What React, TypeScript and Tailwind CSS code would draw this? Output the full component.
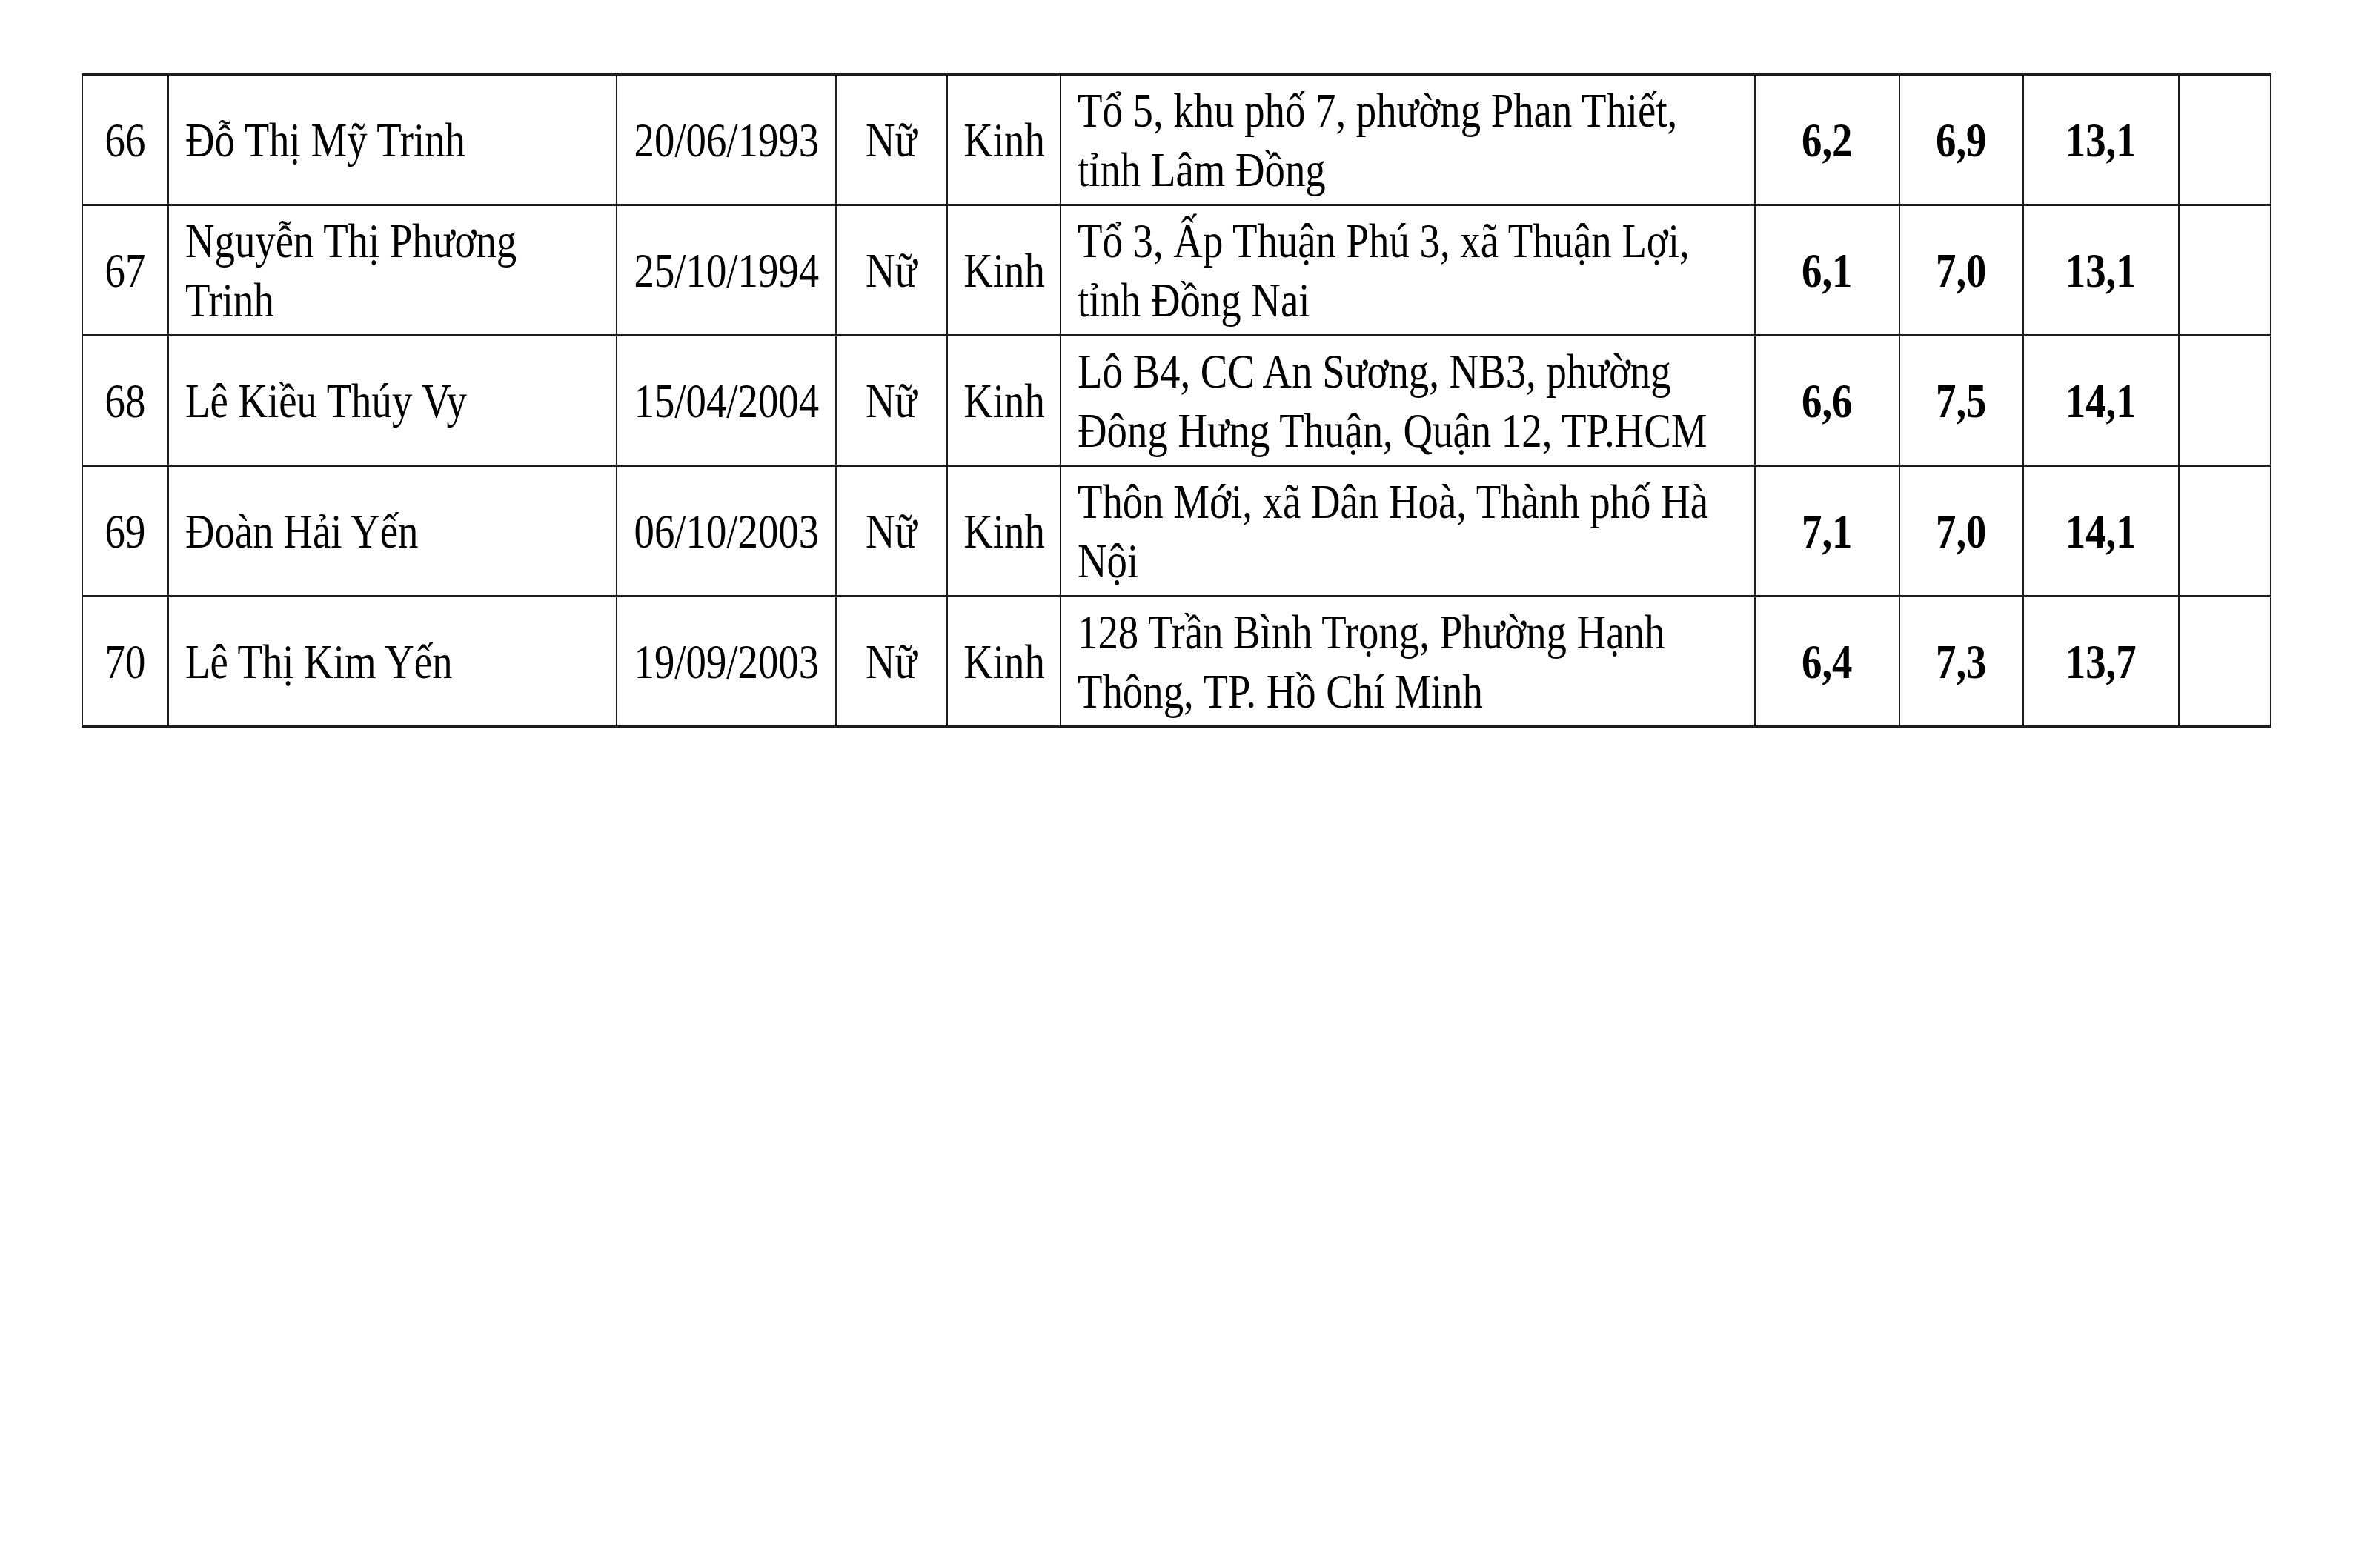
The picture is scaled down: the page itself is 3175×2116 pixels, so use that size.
type Row = {
  no: string;
  name: string[];
  dob: string;
  sex: string;
  eth: string;
  addr: string[];
  a: string;
  b: string;
  total: string;
};

const rows: Row[] = [
  {
    no: "66",
    name: ["Đỗ Thị Mỹ Trinh"],
    dob: "20/06/1993",
    sex: "Nữ",
    eth: "Kinh",
    addr: ["Tổ 5, khu phố 7, phường Phan Thiết,", "tỉnh Lâm Đồng"],
    a: "6,2",
    b: "6,9",
    total: "13,1",
  },
  {
    no: "67",
    name: ["Nguyễn Thị Phương", "Trinh"],
    dob: "25/10/1994",
    sex: "Nữ",
    eth: "Kinh",
    addr: ["Tổ 3, Ấp Thuận Phú 3, xã Thuận Lợi,", "tỉnh Đồng Nai"],
    a: "6,1",
    b: "7,0",
    total: "13,1",
  },
  {
    no: "68",
    name: ["Lê Kiều Thúy Vy"],
    dob: "15/04/2004",
    sex: "Nữ",
    eth: "Kinh",
    addr: ["Lô B4, CC An Sương, NB3, phường", "Đông Hưng Thuận, Quận 12, TP.HCM"],
    a: "6,6",
    b: "7,5",
    total: "14,1",
  },
  {
    no: "69",
    name: ["Đoàn Hải Yến"],
    dob: "06/10/2003",
    sex: "Nữ",
    eth: "Kinh",
    addr: ["Thôn Mới, xã Dân Hoà, Thành phố Hà", "Nội"],
    a: "7,1",
    b: "7,0",
    total: "14,1",
  },
  {
    no: "70",
    name: ["Lê Thị Kim Yến"],
    dob: "19/09/2003",
    sex: "Nữ",
    eth: "Kinh",
    addr: ["128 Trần Bình Trọng, Phường Hạnh", "Thông, TP. Hồ Chí Minh"],
    a: "6,4",
    b: "7,3",
    total: "13,7",
  },
];

function Cell({
  lines,
  align = "center",
  bold = false,
}: {
  lines: string[];
  align?: "left" | "center";
  bold?: boolean;
}) {
  const left = align === "left";
  return (
    <div
      className={`flex h-[176px] min-w-0 items-center border-r-2 border-b-[3px] border-[#1c1c1c] ${
        left ? "justify-start pl-[22px]" : "justify-center"
      }`}
    >
      <span
        className={`block whitespace-nowrap text-[66px] leading-[80px] text-black scale-x-[0.83] ${
          left ? "origin-left text-left" : "origin-center text-center"
        } ${bold ? "font-bold" : "font-normal"}`}
      >
        {lines.map((l, i) => (
          <span key={i} className="block">
            {l}
          </span>
        ))}
      </span>
    </div>
  );
}

export default function App() {
  return (
    <div
      className="h-[2116px] w-[3175px] overflow-hidden bg-white pl-[110px] pt-[99px]"
      style={{ fontFamily: '"Liberation Serif", "Times New Roman", serif' }}
    >
      <div className="grid w-max grid-cols-[116px_605px_296px_150px_153px_937px_195px_167px_210px_124px] border-t-[3px] border-l-2 border-[#1c1c1c]">
        {rows.map((r) => (
          <div key={r.no} className="contents">
            <Cell lines={[r.no]} />
            <Cell lines={r.name} align="left" />
            <Cell lines={[r.dob]} />
            <Cell lines={[r.sex]} />
            <Cell lines={[r.eth]} />
            <Cell lines={r.addr} align="left" />
            <Cell lines={[r.a]} bold />
            <Cell lines={[r.b]} bold />
            <Cell lines={[r.total]} bold />
            <Cell lines={[""]} />
          </div>
        ))}
      </div>
    </div>
  );
}
